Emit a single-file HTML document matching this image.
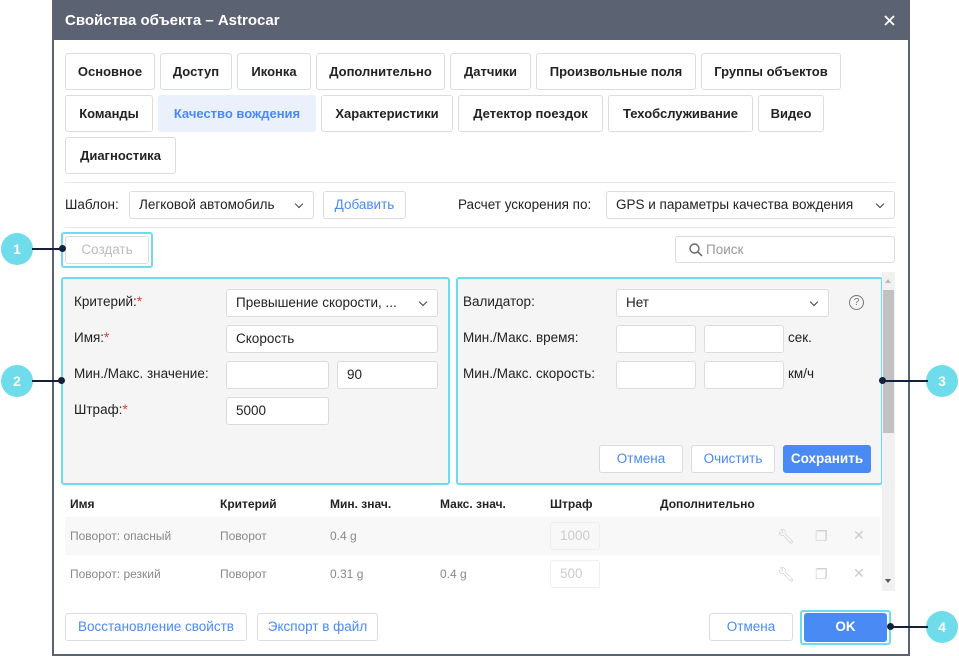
<!DOCTYPE html>
<html><head><meta charset="utf-8"><style>
*{box-sizing:border-box;margin:0;padding:0}
body{width:959px;height:656px;background:#fff;font-family:"Liberation Sans",sans-serif;font-size:13.5px;color:#222;position:relative;overflow:hidden}
.a{position:absolute}
.dlg{left:52px;top:0;width:858px;height:656px;border:2px solid #5b6272;border-top:none;background:#fff}
.hdr{left:52px;top:0;width:858px;height:40px;background:#5b6272;color:#fff;font-weight:bold;font-size:15px;padding:12px 0 0 13px}
.tab{position:absolute;height:37px;border:1px solid #dcdcdc;border-radius:3px;background:#fff;font-weight:bold;font-size:13px;text-align:center;line-height:35px;color:#222}
.tab.act{background:#eaf1fd;border-color:#eaf1fd;color:#4a8af4}
.btn{position:absolute;height:28px;border:1px solid #dcdcdc;border-radius:3px;background:#fff;color:#4a8af4;text-align:center;line-height:26px;font-size:13.5px}
.inp{position:absolute;height:28px;border:1px solid #dcdcdc;border-radius:3px;background:#fff;padding-left:9px;line-height:26px;font-size:13.5px}
.chev{position:absolute;right:11px;top:9px;width:6px;height:6px;border-right:1.5px solid #444;border-bottom:1.5px solid #444;transform:rotate(45deg)}
.hl{position:absolute;border:2px solid #6fdcec;border-radius:3px}
.lbl{position:absolute;font-size:13.5px;color:#222}
.st{color:#e53935}
.sep{position:absolute;height:1px;background:#e6e6e6}
.circ{position:absolute;width:32px;height:32px;border-radius:50%;background:#6fdcec;color:#fff;font-weight:bold;font-size:14px;text-align:center;line-height:32px}
.ln{position:absolute;height:2px;background:#13213a}
.dot{position:absolute;width:7px;height:7px;border-radius:50%;background:#13213a}
.th{position:absolute;font-weight:bold;font-size:12px;color:#222;top:497px}
.td{position:absolute;font-size:12px;color:#888}
.ic{position:absolute;color:#ccc;font-size:14px}
</style></head><body>
<div class="a dlg"></div>
<div class="a hdr">Свойства объекта – Astrocar</div>
<svg class="a" style="left:884px;top:15px" width="11" height="11"><path d="M1 1L10 10M10 1L1 10" stroke="#fff" stroke-width="1.8"/></svg>

<div class="tab" style="left:65px;top:53px;width:90px">Основное</div>
<div class="tab" style="left:160px;top:53px;width:72px">Доступ</div>
<div class="tab" style="left:237px;top:53px;width:74px">Иконка</div>
<div class="tab" style="left:316px;top:53px;width:129px">Дополнительно</div>
<div class="tab" style="left:450px;top:53px;width:81px">Датчики</div>
<div class="tab" style="left:536px;top:53px;width:160px">Произвольные поля</div>
<div class="tab" style="left:701px;top:53px;width:140px">Группы объектов</div>
<div class="tab" style="left:65px;top:95px;width:88px">Команды</div>
<div class="tab act" style="left:158px;top:95px;width:158px">Качество вождения</div>
<div class="tab" style="left:321px;top:95px;width:132px">Характеристики</div>
<div class="tab" style="left:458px;top:95px;width:145px">Детектор поездок</div>
<div class="tab" style="left:608px;top:95px;width:145px">Техобслуживание</div>
<div class="tab" style="left:758px;top:95px;width:66px">Видео</div>
<div class="tab" style="left:65px;top:137px;width:111px">Диагностика</div>

<div class="sep" style="left:65px;top:182px;width:830px"></div>
<div class="lbl" style="left:65px;top:197px">Шаблон:</div>
<div class="inp" style="left:129px;top:191px;width:185px;color:#222">Легковой автомобиль<span class="chev"></span></div>
<div class="btn" style="left:323px;top:191px;width:83px">Добавить</div>
<div class="lbl" style="left:458px;top:197px">Расчет ускорения по:</div>
<div class="inp" style="left:606px;top:191px;width:289px">GPS и параметры качества вождения<span class="chev"></span></div>
<div class="sep" style="left:65px;top:227px;width:830px"></div>

<div class="hl" style="left:61px;top:232px;width:92px;height:36px"></div>
<div class="btn" style="left:65px;top:236px;width:84px;color:#bbb">Создать</div>
<div class="inp" style="left:675px;top:236px;width:220px;height:27px;color:#999;padding-left:30px">Поиск</div>
<svg class="a" style="left:689px;top:243px" width="14" height="14"><circle cx="5.5" cy="5.5" r="4.5" stroke="#666" stroke-width="1.4" fill="none"/><path d="M9 9l4 4" stroke="#666" stroke-width="1.5"/></svg>

<div class="a" style="left:63px;top:279px;width:385px;height:204px;background:#f5f5f5"></div>
<div class="hl" style="left:61px;top:277px;width:389px;height:208px"></div>
<div class="lbl" style="left:74px;top:294px">Критерий:<span class="st">*</span></div>
<div class="inp" style="left:226px;top:289px;width:212px">Превышение скорости, ...<span class="chev"></span></div>
<div class="lbl" style="left:74px;top:330px">Имя:<span class="st">*</span></div>
<div class="inp" style="left:226px;top:325px;width:212px">Скорость</div>
<div class="lbl" style="left:74px;top:366px">Мин./Макс. значение:</div>
<div class="inp" style="left:226px;top:361px;width:103px"></div>
<div class="inp" style="left:337px;top:361px;width:101px">90</div>
<div class="lbl" style="left:74px;top:402px">Штраф:<span class="st">*</span></div>
<div class="inp" style="left:226px;top:397px;width:103px">5000</div>

<div class="a" style="left:458px;top:279px;width:423px;height:204px;background:#f5f5f5"></div>
<div class="hl" style="left:456px;top:277px;width:427px;height:208px"></div>
<div class="lbl" style="left:463px;top:294px">Валидатор:</div>
<div class="inp" style="left:616px;top:289px;width:213px">Нет<span class="chev"></span></div>
<div class="a" style="left:849px;top:295px;width:15px;height:15px;border:1px solid #777;border-radius:50%;font-size:10px;text-align:center;line-height:13px;color:#777">?</div>
<div class="lbl" style="left:463px;top:330px">Мин./Макс. время:</div>
<div class="inp" style="left:616px;top:325px;width:80px"></div>
<div class="inp" style="left:704px;top:325px;width:80px"></div>
<div class="lbl" style="left:788px;top:330px">сек.</div>
<div class="lbl" style="left:463px;top:366px">Мин./Макс. скорость:</div>
<div class="inp" style="left:616px;top:361px;width:80px"></div>
<div class="inp" style="left:704px;top:361px;width:80px"></div>
<div class="lbl" style="left:788px;top:366px">км/ч</div>
<div class="btn" style="left:599px;top:445px;width:84px">Отмена</div>
<div class="btn" style="left:691px;top:445px;width:84px">Очистить</div>
<div class="btn" style="left:783px;top:445px;width:88px;background:#4a8af4;border-color:#4a8af4;color:#fff;font-weight:bold">Сохранить</div>

<div class="a" style="left:882px;top:272px;width:13px;height:319px;background:#f1f1f1"></div>
<div class="a" style="left:883px;top:290px;width:11px;height:143px;background:#c1c1c1"></div>
<div class="a" style="left:885px;top:279px;border:3.5px solid transparent;border-bottom:4px solid #bbb;border-top:none"></div>
<div class="a" style="left:885px;top:579px;border:3.5px solid transparent;border-top:4px solid #555;border-bottom:none"></div>

<div class="th" style="left:70px">Имя</div>
<div class="th" style="left:220px">Критерий</div>
<div class="th" style="left:330px">Мин. знач.</div>
<div class="th" style="left:440px">Макс. знач.</div>
<div class="th" style="left:550px">Штраф</div>
<div class="th" style="left:660px">Дополнительно</div>
<div class="a" style="left:65px;top:517px;width:815px;height:38px;background:#f8f8f8"></div>
<div class="td" style="left:70px;top:529px">Поворот: опасный</div>
<div class="td" style="left:220px;top:529px">Поворот</div>
<div class="td" style="left:330px;top:529px">0.4 g</div>
<div class="inp" style="left:550px;top:522px;width:50px;color:#ccc;background:#f8f8f8;border-color:#eee">1000</div>
<div class="td" style="left:70px;top:567px">Поворот: резкий</div>
<div class="td" style="left:220px;top:567px">Поворот</div>
<div class="td" style="left:330px;top:567px">0.31 g</div>
<div class="td" style="left:440px;top:567px">0.4 g</div>
<div class="inp" style="left:550px;top:560px;width:50px;color:#ccc;border-color:#eee">500</div>
<div class="ic" style="left:777px;top:528px">🔧︎</div><div class="ic" style="left:815px;top:528px">❐</div><div class="ic" style="left:853px;top:527px">✕</div>
<div class="ic" style="left:777px;top:566px">🔧︎</div><div class="ic" style="left:815px;top:566px">❐</div><div class="ic" style="left:853px;top:565px">✕</div>

<div class="btn" style="left:65px;top:613px;width:182px">Восстановление свойств</div>
<div class="btn" style="left:257px;top:613px;width:121px">Экспорт в файл</div>
<div class="btn" style="left:709px;top:613px;width:84px">Отмена</div>
<div class="hl" style="left:800px;top:610px;width:91px;height:35px"></div>
<div class="btn" style="left:804px;top:613px;width:83px;height:29px;background:#4a8af4;border-color:#4a8af4;color:#fff;font-weight:bold">OK</div>

<div class="circ" style="left:1px;top:233px">1</div><div class="ln" style="left:32px;top:248px;width:30px"></div><div class="dot" style="left:59px;top:245px"></div>
<div class="circ" style="left:1px;top:365px">2</div><div class="ln" style="left:32px;top:380px;width:30px"></div><div class="dot" style="left:58px;top:377px"></div>
<div class="circ" style="left:926px;top:365px">3</div><div class="ln" style="left:882px;top:380px;width:46px"></div><div class="dot" style="left:879px;top:377px"></div>
<div class="circ" style="left:926px;top:611px">4</div><div class="ln" style="left:890px;top:626px;width:38px"></div><div class="dot" style="left:887px;top:623px"></div>
</body></html>
